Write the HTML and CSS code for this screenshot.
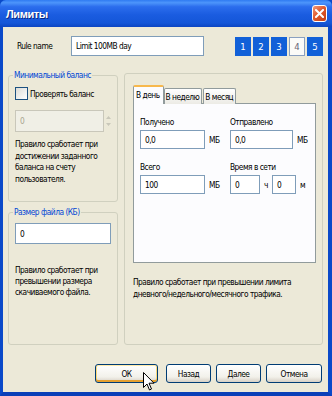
FILE: index.html
```html
<!DOCTYPE html>
<html lang="ru">
<head>
    <meta charset="UTF-8">
    <title>Лимиты</title>
    <link rel="stylesheet" href="styles.css">
</head>
<body>
    <div class="window">
        <div class="titlebar">
            <span class="title">Лимиты</span>
            <span class="close-btn">
                <svg width="9" height="9" viewBox="0 0 9 9"><path d="M1 1 L8 8 M8 1 L1 8" stroke="#fff" stroke-width="2" stroke-linecap="square"/></svg>
            </span>
        </div>

        <div class="client">
            <div class="top-row">
                <span class="rule-label">Rule name</span>
                <div class="field rule-input">Limit 100MB day</div>
                <div class="steps">
                    <span class="step">1</span>
                    <span class="step">2</span>
                    <span class="step">3</span>
                    <span class="step current">4</span>
                    <span class="step">5</span>
                </div>
            </div>

            <div class="main-row">
                <div class="left-col">
                    <fieldset class="group balance">
                        <legend>Минимальный баланс</legend>
                        <div class="check"><span class="checkbox"></span>Проверять баланс</div>
                        <div class="spin">
                            <span class="field disabled">0</span>
                            <span class="spin-arrows">
                                <svg width="5" height="14" viewBox="0 0 5 14"><path d="M0 5 L2.5 2 L5 5 Z M0 9 L2.5 12 L5 9 Z" fill="#c9c7ba"/></svg>
                            </span>
                        </div>
                        <p class="note">Правило сработает при<br>достижении заданного<br>баланса на счету<br>пользователя.</p>
                    </fieldset>

                    <fieldset class="group filesize">
                        <legend>Размер файла (КБ)</legend>
                        <div class="field size-input">0</div>
                        <p class="note">Правило сработает при<br>превышении размера<br>скачиваемого файла.</p>
                    </fieldset>
                </div>

                <fieldset class="group traffic">
                    <div class="tabs">
                        <span class="tab active">В день</span>
                        <span class="tab">В неделю</span>
                        <span class="tab">В месяц</span>
                    </div>
                    <div class="tab-panel">
                        <div class="cell">
                            <span class="cell-label">Получено</span>
                            <div class="cell-row"><span class="field num">0,0</span><span class="unit">МБ</span></div>
                        </div>
                        <div class="cell">
                            <span class="cell-label">Отправлено</span>
                            <div class="cell-row"><span class="field num">0,0</span><span class="unit">МБ</span></div>
                        </div>
                        <div class="cell">
                            <span class="cell-label">Всего</span>
                            <div class="cell-row"><span class="field num">100</span><span class="unit">МБ</span></div>
                        </div>
                        <div class="cell">
                            <span class="cell-label">Время в сети</span>
                            <div class="cell-row">
                                <span class="field hours">0</span><span class="unit">ч</span>
                                <span class="field mins">0</span><span class="unit">м</span>
                            </div>
                        </div>
                    </div>
                    <p class="note">Правило сработает при превышении лимита<br>дневного/недельного/месячного трафика.</p>
                </fieldset>
            </div>

            <div class="buttons">
                <span class="btn default">ОК</span>
                <span class="btn">Назад</span>
                <span class="btn">Далее</span>
                <span class="btn cancel">Отмена</span>
            </div>
        </div>

        <svg class="cursor" width="12" height="19" viewBox="0 0 12 19">
            <path d="M0.5 0.5 L0.5 15.5 L4 12 L6.5 18 L8.5 17 L6 11.2 L11 11.2 Z" fill="#fff" stroke="#000" stroke-width="1" stroke-linejoin="miter"/>
        </svg>
    </div>
</body>
</html>
```

FILE: styles.css
```css
:root {
    --xp-face: #ece9d8;
    --xp-blue: #0c4fd4;
    --field-border: #7f9db9;
    --group-border: #d0d0bf;
    --legend: #0046d5;
    --text: #000;
}
body {
    margin: 0;
    font-family: "DejaVu Sans Condensed", "Liberation Sans", sans-serif;
    font-size: 8.3px;
    letter-spacing: -0.5px;
    white-space: nowrap;
    color: var(--text);
}
.window {
    position: relative;
    width: 332px;
    height: 396px;
    box-sizing: border-box;
    display: flex;
    flex-direction: column;
    background: var(--xp-blue);
    border-left: 3px solid #0a49c9;
    border-right: 4px solid #0a49c9;
    border-bottom: 4px solid #0a3fb8;
}
.titlebar {
    height: 27px;
    margin: 0 -4px 0 -3px;
    padding: 0 4px 0 6px;
    display: flex;
    align-items: center;
    justify-content: space-between;
    background: linear-gradient(to bottom, #2f7bf2 0%, #4d95fb 10%, #2b6ded 25%, #1a5ce0 55%, #1456d8 85%, #0c45c2 100%);
    border-radius: 6px 6px 0 0;
}
.title {
    color: #fff;
    font-family: "Liberation Sans", sans-serif;
    font-weight: bold;
    font-size: 11px;
    letter-spacing: -0.4px;
    text-shadow: 1px 1px 0 #0a2a80;
}
.close-btn {
    width: 15px;
    height: 17px;
    margin-right: 1px;
    box-sizing: border-box;
    border: 1px solid #fff;
    border-radius: 3px;
    background: linear-gradient(135deg, #f09b7d 0%, #e15a2e 45%, #c33d12 100%);
    display: flex;
    align-items: center;
    justify-content: center;
}
.client {
    flex: 1;
    background: var(--xp-face);
    padding: 9px 5px 9px 5px;
    display: flex;
    flex-direction: column;
}
.top-row {
    display: flex;
    align-items: center;
    height: 20px;
}
.rule-label {
    width: 54px;
    padding-left: 9px;
}
.field {
    display: flex;
    align-items: center;
    box-sizing: border-box;
    background: #fff;
    border: 1px solid var(--field-border);
    padding-left: 4px;
}
.rule-input {
    width: 133px;
    height: 20px;
}
.steps {
    display: flex;
    gap: 2px;
    margin-left: auto;
}
.step {
    width: 16px;
    height: 19px;
    box-sizing: border-box;
    display: flex;
    align-items: center;
    justify-content: center;
    background: #1160d8;
    color: #fff;
    font-size: 9.5px;
    letter-spacing: 0;
}
.step.current {
    background: #fbfbf8;
    border: 1px solid #8aa0c0;
    color: #667;
}
.main-row {
    display: flex;
    gap: 6px;
    margin-top: 14px;
    height: 275px;
}
.left-col {
    width: 110px;
    display: flex;
    flex-direction: column;
    gap: 5px;
}
.group {
    margin: 0;
    padding: 0 6px;
    border: 1px solid var(--group-border);
    border-radius: 3px;
    min-width: 0;
}
.group legend {
    color: var(--legend);
    padding: 0 1px;
    margin-left: -2px;
    line-height: 11px;
}
.balance {
    height: 132px;
    box-sizing: border-box;
    padding-top: 6px;
}
.filesize {
    flex: 1;
    padding-top: 5px;
}
.check {
    display: flex;
    align-items: center;
    height: 13px;
}
.checkbox {
    width: 11px;
    height: 11px;
    border: 1px solid #1c5180;
    background: linear-gradient(135deg, #dcdcd7, #fff);
    margin-right: 2px;
}
.spin {
    display: flex;
    margin-top: 10px;
    height: 22px;
    width: 97px;
}
.spin .field.disabled {
    flex: 1;
    background: #f0efe6;
    border-color: #c9c7ba;
    color: #a8a690;
}
.spin-arrows {
    width: 8px;
    display: flex;
    align-items: center;
    justify-content: center;
}
.note {
    margin: 7px 0 0;
    line-height: 11.7px;
}
.size-input {
    width: 96px;
    height: 21px;
}
.filesize .note {
    margin-top: 21px;
    line-height: 11px;
}
.traffic {
    flex: 1;
    margin-top: 3px;
    padding: 11px 6px 0 8px;
}
.tabs {
    display: flex;
    align-items: flex-end;
    height: 19px;
    position: relative;
    z-index: 1;
}
.tab {
    height: 16px;
    box-sizing: border-box;
    padding: 0 2px 0 1px;
    display: flex;
    align-items: center;
    border: 1px solid #919b9c;
    border-bottom: none;
    border-radius: 2px 2px 0 0;
    background: linear-gradient(to bottom, #fff, #ecebe5);
    margin-right: 1px;
}
.tab.active {
    height: 19px;
    padding: 0 3px 2px 2px;
    background: #fcfcfe;
    border-top: 2px solid #f7b84c;
    margin-right: 0;
}
.tab-panel {
    height: 160px;
    margin-top: -1px;
    box-sizing: border-box;
    border: 1px solid #919b9c;
    background: #fcfcfe;
    padding: 13px 0 0 6px;
    display: grid;
    grid-template-columns: 90px 1fr;
    row-gap: 13px;
    align-content: start;
}
.cell {
    display: flex;
    flex-direction: column;
    gap: 2px;
}
.cell-label {
    line-height: 11px;
}
.cell-row {
    display: flex;
    align-items: center;
}
.field.num {
    width: 65px;
    height: 19px;
}
.cell:nth-child(2) .field.num {
    width: 63px;
}
.unit {
    margin-left: 4px;
}
.field.hours {
    width: 30px;
    height: 19px;
}
.field.mins {
    width: 24px;
    height: 19px;
    margin-left: 4px;
}
.traffic .note {
    margin-top: 13px;
    line-height: 12px;
}
.buttons {
    display: flex;
    justify-content: flex-end;
    gap: 5px;
    margin-top: auto;
    padding-right: 1px;
}
.btn {
    height: 19px;
    box-sizing: border-box;
    display: flex;
    align-items: center;
    justify-content: center;
    border: 1px solid #003c74;
    border-radius: 3px;
    background: linear-gradient(to bottom, #fff, #f2f1ea 70%, #d6d0c5);
    width: 45px;
}
.btn.default {
    width: 63px;
    margin-right: 3px;
    box-shadow: inset 0 1px 0 #ffe9a8, inset 0 -2px 0 #e5a130, inset 1px 0 0 #fbd97a, inset -1px 0 0 #fbd97a;
}
.btn.cancel {
    width: 56px;
}
.cursor {
    position: absolute;
    left: 140px;
    top: 372px;
}
```
